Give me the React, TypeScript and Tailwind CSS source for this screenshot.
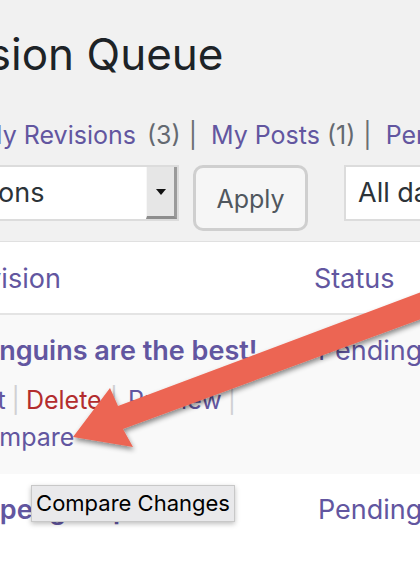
const purple = "text-[#6256a0]";

function Sep({ light }: { light?: boolean }) {
  return (
    <span className={light ? "mx-[6px] text-[#d0d0d3]" : "ml-[8px] mr-[14px] text-[#6b6e72]"}>|</span>
  );
}

function Arrow() {
  return (
    <svg className="pointer-events-none absolute left-0 top-0" width="420" height="582" viewBox="0 0 420 582">
      <defs>
        <filter id="shadow" x="-20%" y="-20%" width="140%" height="140%">
          <feDropShadow dx="1" dy="3" stdDeviation="2.5" floodColor="#000" floodOpacity="0.45" />
        </filter>
      </defs>
      <polygon
        points="440,285 440,312 123,429 133,447 73,437 110,388 118,406"
        fill="#ec6553"
        filter="url(#shadow)"
      />
    </svg>
  );
}

export default function App() {
  return (
    <div className="relative h-[582px] w-[420px] overflow-hidden bg-[#f1f1f1] font-['Inter',sans-serif]">
      <h1 className="ml-[-100px] whitespace-nowrap pt-[28px] text-[44px] font-normal leading-[52px] text-[#1d2327]">
        Revision Queue
      </h1>

      <div className="ml-[-20px] mt-[40px] whitespace-nowrap text-[25px] leading-[30px]">
        <a className={purple}>My Revisions</a> <span className="ml-[4px] text-[#646970]">(3)</span>
        <Sep />
        <a className={purple}>My Posts</a> <span className="text-[#646970]">(1)</span>
        <Sep />
        <a className={purple}>Pending</a> <span className="text-[#646970]">(2)</span>
      </div>

      <div className="mt-[15px] flex items-start whitespace-nowrap">
        <div className="ml-[-140px] flex h-[56px] w-[319px] shrink-0 items-center border-2 border-[#dcdcdc] bg-white pl-[24px]">
          <span className="flex-1 text-[27px] text-[#2c3338]">Bulk Actions</span>
          <div className="flex h-[52px] w-[31px] items-center justify-center border-b-[3px] border-l border-r-[3px] border-b-[#8d8d8d] border-l-[#f7f7f7] border-r-[#9a9a9a] bg-[#e6e6e6]">
            <svg width="12" height="8" viewBox="0 0 12 8">
              <polygon points="1,1 11,1 6,7" fill="#111" />
            </svg>
          </div>
        </div>
        <button className="ml-[14px] flex h-[66px] w-[115px] shrink-0 items-center justify-center rounded-[10px] border-[3px] border-[#cfcfcf] bg-[#f6f6f6] pt-[3px] text-[25px] text-[#50575e]">
          Apply
        </button>
        <div className="ml-[36px] flex h-[56px] w-[200px] shrink-0 items-center border-2 border-[#dcdcdc] bg-white pl-[12px] text-[27px] text-[#2c3338]">
          All dates
        </div>
      </div>

      <div className="mt-[10px] border-t border-[#e0e0e0] bg-white">
        <div className="grid h-[73px] grid-cols-[314px_1fr] items-center border-b-2 border-[#e4e4e4] pt-[3px] text-[27px]">
          <div className={`ml-[-46px] whitespace-nowrap ${purple}`}>Revision</div>
          <div className={purple}>Status</div>
        </div>

        <div className="grid h-[159px] grid-cols-[314px_1fr] bg-[#f9f9f9] pt-[18px]">
          <div className="whitespace-nowrap">
            <div className={`ml-[-34px] text-[27px] font-semibold leading-[36px] ${purple}`}>
              Penguins are the best!
            </div>
            <div className="mt-[13px] text-[25px] leading-[37px]">
              <div className="ml-[-39px]">
                <a className={purple}>Edit</a>
                <Sep light />
                <a className="text-[#b32d2e]">Delete</a>
                <span className="ml-[8px] mr-[10px] text-[#d0d0d3]">|</span>
                <a className={purple}>Preview</a>
                <Sep light />
              </div>
              <div className="ml-[-34px]">
                <a className={purple}>Compare</a>
              </div>
            </div>
          </div>
          <div className={`pl-[4px] text-[27px] leading-[36px] ${purple}`}>Pending</div>
        </div>

        <div className="grid h-[110px] grid-cols-[314px_1fr] bg-white pt-[18px]">
          <div className={`ml-[-48px] whitespace-nowrap text-[27px] font-semibold leading-[36px] ${purple}`}>
            My penguin pals
          </div>
          <div className={`pl-[4px] text-[27px] leading-[36px] ${purple}`}>Pending</div>
        </div>
      </div>

      <Arrow />

      <div className="absolute left-[31px] top-[485px] flex h-[37px] w-[204px] items-center justify-center border border-[#c8c8c8] bg-[#e9e9eb] text-[22px] text-black shadow-[0_2px_5px_rgba(0,0,0,0.25)]">
        Compare Changes
      </div>
    </div>
  );
}
